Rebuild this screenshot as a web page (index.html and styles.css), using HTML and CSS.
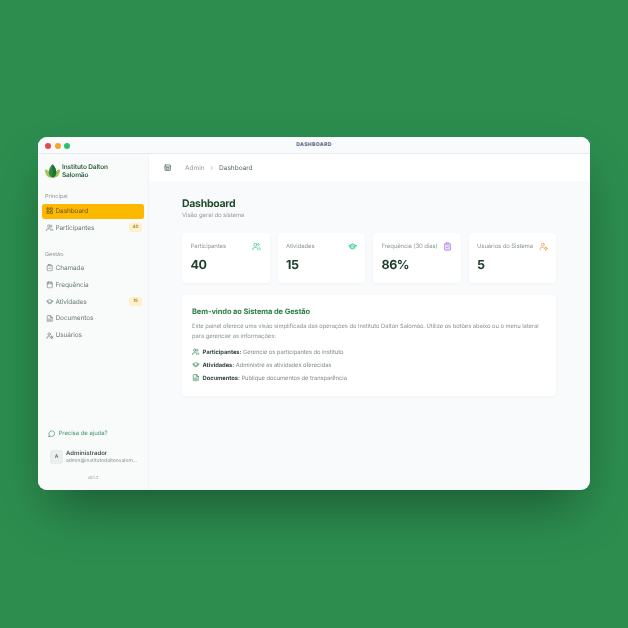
FILE: index.html
```html
<!DOCTYPE html>
<html lang="pt">
<head>
  <meta charset="UTF-8">
  <title>Dashboard</title>
  <link rel="stylesheet" href="styles.css">
</head>
<body>
  <svg class="defs" width="0" height="0">
    <symbol id="i-users" viewBox="0 0 24 24"><path d="M16 21v-2a4 4 0 0 0-4-4H6a4 4 0 0 0-4 4v2"/><circle cx="9" cy="7" r="4"/><path d="M22 21v-2a4 4 0 0 0-3-3.87"/><path d="M16 3.13a4 4 0 0 1 0 7.75"/></symbol>
    <symbol id="i-cap" viewBox="0 0 24 24"><path d="M22 10 12 5 2 10l10 5 10-5z"/><path d="M6 12.5V16c3 3 9 3 12 0v-3.5"/></symbol>
    <symbol id="i-clip" viewBox="0 0 24 24"><path d="M16 4h2a2 2 0 0 1 2 2v14a2 2 0 0 1-2 2H6a2 2 0 0 1-2-2V6a2 2 0 0 1 2-2h2"/><rect x="8" y="2" width="8" height="4" rx="1"/><path d="m9 14 2 2 4-4"/></symbol>
    <symbol id="i-usercog" viewBox="0 0 24 24"><circle cx="10" cy="7" r="4"/><path d="M3 21v-2a5 5 0 0 1 5-5h3"/><circle cx="18" cy="17" r="3"/><path d="M18 12.5V14M18 20v1.500M13.700 17h1.300M21 17h1.300"/></symbol>
    <symbol id="i-doc" viewBox="0 0 24 24"><path d="M14 2H6a2 2 0 0 0-2 2v16a2 2 0 0 0 2 2h12a2 2 0 0 0 2-2V8z"/><path d="M14 2v6h6"/><path d="M8 13h8M8 17h8"/></symbol>
    <symbol id="i-cal" viewBox="0 0 24 24"><rect x="4" y="4" width="16" height="18" rx="2"/><path d="M8 2v4M16 2v4M4 9h16"/></symbol>
    <symbol id="i-grid" viewBox="0 0 24 24"><rect x="3" y="3" width="7" height="7" rx="1"/><rect x="14" y="3" width="7" height="7" rx="1"/><rect x="3" y="14" width="7" height="7" rx="1"/><rect x="14" y="14" width="7" height="7" rx="1"/></symbol>
    <symbol id="i-chat" viewBox="0 0 24 24"><path d="M7.900 20A9 9 0 1 0 4 16.100L2 22z"/></symbol>
    <symbol id="i-panel" viewBox="0 0 24 24"><rect x="3" y="3" width="18" height="18" rx="2"/><path d="M3 9h18"/><rect x="8" y="12" width="8" height="5"/></symbol>
  </svg>

  <div class="window">
    <div class="titlebar">
      <div class="dots">
        <span class="dot red"></span><span class="dot amber"></span><span class="dot green"></span>
      </div>
      <span class="title">DASHBOARD</span>
    </div>
    <div class="app">
      <aside class="sidebar">
        <div class="brand">
          <svg class="leaf" viewBox="0 0 20 18">
            <path d="M0 7c4 0 7 3 8 11C3 18 0 13 0 7z" fill="#a3c94e"/>
            <path d="M20 7c-4 0-7 3-8 11 5 0 8-5 8-11z" fill="#a3c94e"/>
            <path d="M10 0c3 3 5 7 5 11 0 3-2 6-5 7-3-1-5-4-5-7 0-4 2-8 5-11z" fill="#2f8a3f"/>
            <path d="M10 0c3 3 5 7 5 11 0 3-2 6-5 7z" fill="#1f6f35"/>
          </svg>
          <span class="brand-name">Instituto Dalton Salomão</span>
        </div>
        <div class="nav-label">Principal</div>
        <a class="nav-item active"><svg class="ic"><use href="#i-grid"/></svg>Dashboard</a>
        <a class="nav-item"><svg class="ic"><use href="#i-users"/></svg>Participantes<span class="count">40</span></a>
        <div class="nav-label second">Gestão</div>
        <a class="nav-item"><svg class="ic"><use href="#i-clip"/></svg>Chamada</a>
        <a class="nav-item"><svg class="ic"><use href="#i-cal"/></svg>Frequência</a>
        <a class="nav-item"><svg class="ic"><use href="#i-cap"/></svg>Atividades<span class="count">15</span></a>
        <a class="nav-item"><svg class="ic"><use href="#i-doc"/></svg>Documentos</a>
        <a class="nav-item"><svg class="ic"><use href="#i-usercog"/></svg>Usuários</a>
        <div class="side-foot">
          <a class="help"><svg class="ic"><use href="#i-chat"/></svg>Precisa de ajuda?</a>
          <div class="user">
            <span class="avatar">A</span>
            <div class="user-text">
              <div class="user-name">Administrador</div>
              <div class="user-mail">admin@institutodaltonsalom...</div>
            </div>
          </div>
          <div class="version">v0.1.2</div>
        </div>
      </aside>
      <div class="main">
        <header class="topbar">
          <svg class="ic panel"><use href="#i-panel"/></svg>
          <span class="crumb">Admin</span>
          <span class="crumb sep">›</span>
          <span class="crumb current">Dashboard</span>
        </header>
        <main class="content">
          <h1>Dashboard</h1>
          <p class="sub">Visão geral do sistema</p>
          <div class="stats">
            <div class="stat">
              <div class="stat-top">Participantes<svg class="ic teal"><use href="#i-users"/></svg></div>
              <div class="stat-num">40</div>
            </div>
            <div class="stat">
              <div class="stat-top">Atividades<svg class="ic mint"><use href="#i-cap"/></svg></div>
              <div class="stat-num">15</div>
            </div>
            <div class="stat">
              <div class="stat-top">Frequência (30 dias)<svg class="ic purple"><use href="#i-clip"/></svg></div>
              <div class="stat-num">86%</div>
            </div>
            <div class="stat">
              <div class="stat-top">Usuários do Sistema<svg class="ic orange"><use href="#i-usercog"/></svg></div>
              <div class="stat-num">5</div>
            </div>
          </div>
          <section class="welcome">
            <h2>Bem-vindo ao Sistema de Gestão</h2>
            <p>Este painel oferece uma visão simplificada das operações do Instituto Dalton Salomão. Utilize os botões abaixo ou o menu lateral para gerenciar as informações:</p>
            <ul>
              <li><svg class="ic"><use href="#i-users"/></svg><span><b>Participantes:</b> Gerencie os participantes do instituto</span></li>
              <li><svg class="ic"><use href="#i-cap"/></svg><span><b>Atividades:</b> Administre as atividades oferecidas</span></li>
              <li><svg class="ic"><use href="#i-doc"/></svg><span><b>Documentos:</b> Publique documentos de transparência</span></li>
            </ul>
          </section>
        </main>
      </div>
    </div>
  </div>
</body>
</html>
```

FILE: styles.css
```css
html, body {
  height: 100%;
}
body {
  margin: 0;
  background: #2c8d4f;
  font-family: 'Inter', 'Liberation Sans', sans-serif;
  text-rendering: geometricPrecision;
  color: #1d4a2c;
  padding-top: 137px;
  box-sizing: border-box;
}
.defs {
  position: absolute;
}
.window {
  width: 552px;
  height: 353px;
  margin-left: 38px;
  background: #f8fafb;
  border-radius: 9px;
  overflow: hidden;
  display: flex;
  flex-direction: column;
  box-shadow: 0 25px 50px -12px rgba(0, 0, 0, 0.4);
  filter: blur(0.4px);
}
.titlebar {
  height: 17px;
  flex: none;
  position: relative;
  display: flex;
  align-items: center;
  justify-content: center;
  background: #f8fafc;
  border-bottom: 1px solid #e6eaee;
  box-sizing: border-box;
}
.dots {
  position: absolute;
  left: 7px;
  top: 6px;
  display: flex;
  gap: 3.500px;
}
.dot {
  width: 6px;
  height: 6px;
  border-radius: 50%;
}
.red { background: #e8484a; }
.amber { background: #f2a62c; }
.green { background: #2cc268; }
.title {
  font-size: 5px;
  font-weight: 800;
  letter-spacing: 0.4px;
  color: #5c6a85;
}
.app {
  flex: 1;
  display: flex;
  min-height: 0;
}
.ic {
  width: 7.500px;
  height: 7.500px;
  flex: none;
  fill: none;
  stroke: currentColor;
  stroke-width: 2.200;
  stroke-linecap: round;
  stroke-linejoin: round;
}

/* sidebar */
.sidebar {
  width: 111px;
  flex: none;
  background: #f9fafa;
  border-right: 1px solid #f1f3f4;
  padding: 0 4px;
  box-sizing: border-box;
  display: flex;
  flex-direction: column;
}
.brand {
  display: flex;
  align-items: center;
  gap: 2px;
  padding: 7px 3px 0;
  height: 26px;
  box-sizing: border-box;
}
.leaf {
  width: 15px;
  height: 14px;
  flex: none;
}
.brand-name {
  font-size: 6.500px;
  line-height: 8px;
  font-weight: 600;
  letter-spacing: -0.12px;
  color: #2a5f3a;
  width: 60px;
}
.nav-label {
  font-size: 5.500px;
  color: #8c969c;
  padding: 14px 3px 2.500px;
  line-height: 7px;
}
.nav-label.second {
  padding-top: 15px;
  padding-bottom: 1.500px;
}
.nav-item {
  display: flex;
  align-items: center;
  gap: 2px;
  height: 15px;
  margin-bottom: 1.800px;
  padding: 0 2px 0 4px;
  border-radius: 2.500px;
  font-size: 6.500px;
  letter-spacing: -0.1px;
  color: #6d7d78;
}
.nav-item .ic {
  color: #76847f;
}
.nav-item.active {
  background: #fdb900;
  color: #6b5410;
}
.nav-item.active .ic {
  color: #6b5410;
}
.count {
  margin-left: auto;
  width: 13px;
  height: 9px;
  background: #fdf0cc;
  color: #a5812b;
  font-size: 4.500px;
  font-weight: 600;
  display: flex;
  align-items: center;
  justify-content: center;
  border-radius: 2.500px;
}
.side-foot {
  margin-top: auto;
  padding-bottom: 10px;
}
.help {
  display: flex;
  align-items: center;
  gap: 3px;
  padding-left: 6px;
  font-size: 6px;
  letter-spacing: -0.05px;
  color: #3f9a6c;
}
.user {
  display: flex;
  align-items: center;
  gap: 3px;
  margin: 13px 0 0 8px;
}
.avatar {
  width: 13px;
  height: 14px;
  background: #e9efec;
  border-radius: 2px;
  font-size: 5px;
  font-weight: 600;
  color: #5f6d68;
  display: flex;
  align-items: center;
  justify-content: center;
  flex: none;
}
.user-name {
  font-size: 6px;
  font-weight: 600;
  line-height: 8px;
  color: #4a5652;
}
.user-mail {
  font-size: 5px;
  line-height: 6px;
  color: #8a9590;
  white-space: nowrap;
}
.version {
  margin-top: 11px;
  text-align: center;
  font-size: 4px;
  color: #98a19d;
}

/* main */
.main {
  flex: 1;
  min-width: 0;
  display: flex;
  flex-direction: column;
}
.topbar {
  height: 27px;
  flex: none;
  background: #fff;
  display: flex;
  align-items: center;
  padding-left: 15px;
  box-sizing: border-box;
  font-size: 6.500px;
}
.panel {
  color: #4f6358;
  margin-right: 13.500px;
}
.crumb {
  color: #95a19c;
}
.crumb.sep {
  margin: 0 6px;
}
.crumb.current {
  color: #5d6d66;
}
.content {
  flex: 1;
  padding: 16px 34px 0 33px;
}
h1 {
  margin: 0;
  font-size: 10.500px;
  line-height: 13px;
  font-weight: 700;
  letter-spacing: -0.3px;
  color: #1f4a2c;
}
.sub {
  margin: 2px 0 0;
  font-size: 6px;
  line-height: 8px;
  letter-spacing: -0.08px;
  color: #96a29d;
}
.stats {
  display: grid;
  grid-template-columns: repeat(4, 1fr);
  gap: 8px;
  margin-top: 13px;
}
.stat {
  height: 50px;
  background: #fff;
  border-radius: 4px;
  padding: 9px 8.500px 0;
  box-sizing: border-box;
  box-shadow: 0 1px 3px rgba(30, 60, 40, 0.04);
}
.stat-top {
  display: flex;
  justify-content: space-between;
  align-items: center;
  font-size: 6px;
  line-height: 8px;
  letter-spacing: -0.12px;
  color: #8f9a96;
}
.stat-top .ic {
  width: 9px;
  height: 9px;
}
.teal { color: #4cc7a9; }
.mint { color: #2fc87f; fill: #a8ecc8; }
.purple { color: #b98ae8; fill: #e6d6fa; }
.orange { color: #f3a858; }
.stat-num {
  margin-top: 6px;
  font-size: 12.500px;
  line-height: 17px;
  font-weight: 700;
  letter-spacing: -0.5px;
  color: #1f3f2b;
}
.welcome {
  margin-top: 12px;
  height: 101px;
  background: #fff;
  border-radius: 4px;
  padding: 12px 10px 0;
  box-sizing: border-box;
  box-shadow: 0 1px 3px rgba(30, 60, 40, 0.04);
}
h2 {
  margin: 0;
  font-size: 7.500px;
  line-height: 10px;
  font-weight: 700;
  letter-spacing: -0.1px;
  color: #2f8048;
}
.welcome p {
  margin: 5px 0 0;
  font-size: 5.800px;
  line-height: 9.500px;
  letter-spacing: -0.05px;
  color: #87928e;
}
.welcome ul {
  list-style: none;
  margin: 4.500px 0 0;
  padding: 0;
}
.welcome li {
  display: flex;
  align-items: center;
  gap: 3px;
  height: 13px;
  font-size: 5.800px;
  letter-spacing: -0.05px;
  color: #7e8a85;
}
.welcome li .ic {
  color: #3b8a57;
}
.welcome li b {
  color: #34473c;
  font-weight: 700;
}
```
